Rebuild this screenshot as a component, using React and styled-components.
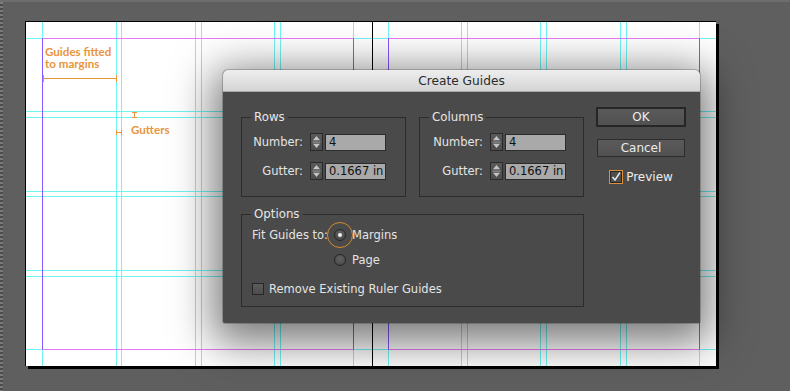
import React from "react";
import styled, { createGlobalStyle } from "styled-components";

const GlobalStyle = createGlobalStyle`
  html, body { margin: 0; padding: 0; background: #5f5f5f; }
  body { width: 790px; height: 391px; overflow: hidden; }
  *, *::before, *::after { box-sizing: border-box; }
`;

const Workspace = styled.div`
  position: relative;
  width: 790px;
  height: 391px;
  background: #5f5f5f;
  display: flex;
  flex-direction: column;
`;

const TopStrip = styled.div`
  flex: none;
  height: 2px;
  background: #6d6d6d;
`;

const WorkRow = styled.div`
  flex: 1;
  display: flex;
`;

const Ruler = styled.div`
  flex: none;
  width: 3px;
  background: repeating-linear-gradient(to bottom, #7a7a7a 0 2px, #4c4c4c 2px 4px);
`;

const Canvas = styled.div`
  flex: 1;
  padding: 19px 0 0 22px;
`;

const Spread = styled.div`
  position: relative;
  width: 691px;
  height: 345px;
  background: #fff;
  border-top: 1px solid #000;
  border-left: 1px solid #000;
  box-shadow: 3px 3px 0 #000;
`;

const VGuide = styled.div`
  position: absolute;
  top: 0;
  bottom: 0;
  left: ${(p) => p.$x}px;
  width: 1px;
  background: #6ff4f4;
`;

const HGuide = styled.div`
  position: absolute;
  left: 0;
  right: 0;
  top: ${(p) => p.$y}px;
  height: 1px;
  background: #6ff4f4;
`;

const MarginBox = styled.div`
  position: absolute;
  top: 16px;
  left: ${(p) => p.$x}px;
  width: 312px;
  height: 312px;
  border-top: 1px solid #e779f6;
  border-bottom: 1px solid #e779f6;
  border-left: 1px solid #8757ff;
  border-right: 1px solid #8757ff;
`;

const Spine = styled.div`
  position: absolute;
  top: 0;
  bottom: 0;
  left: 346px;
  width: 1px;
  background: #000;
`;

const Note = styled.div`
  position: absolute;
  left: ${(p) => p.$x}px;
  top: ${(p) => p.$y}px;
  font-family: Lato, "Open Sans", sans-serif;
  font-weight: 700;
  font-size: 11.6px;
  line-height: 12px;
  color: #e8953d;
  white-space: nowrap;
`;

const NoteLine = styled.div`
  height: 12px;
`;

const Mark = styled.svg`
  position: absolute;
  left: ${(p) => p.$x}px;
  top: ${(p) => p.$y}px;
  overflow: visible;
`;

/* ---------- dialog ---------- */

const Dialog = styled.div`
  position: absolute;
  left: 223px;
  top: 70px;
  width: 477px;
  height: 253px;
  display: flex;
  flex-direction: column;
  background: #4a4a4a;
  border-radius: 5px 5px 2px 2px;
  overflow: hidden;
  box-shadow: 0 10px 42px 10px rgba(0, 0, 0, 0.52), 0 0 0 1px rgba(0, 0, 0, 0.2);
  font-family: "DejaVu Sans", Verdana, sans-serif;
  font-size: 11.5px;
  color: #e4e4e4;
`;

const TitleBar = styled.div`
  flex: none;
  height: 22px;
  display: flex;
  align-items: center;
  justify-content: center;
  background: linear-gradient(#eeeeee, #d4d4d4);
  border-bottom: 1px solid #a9a9a9;
  color: #2b2b2b;
  font-size: 12.2px;
`;

const Body = styled.div`
  flex: 1;
  display: flex;
  gap: 12px;
  padding: 15px 15px 0 18px;
`;

const MainCol = styled.div`
  width: 343px;
  padding-top: 3px;
  display: flex;
  flex-direction: column;
  gap: 10px;
`;

const GroupRow = styled.div`
  display: flex;
  gap: 13px;
`;

const Group = styled.fieldset`
  margin: 0;
  width: ${(p) => p.$w}px;
  border: 1px solid #2c2c2c;
  padding: ${(p) => p.$pad};
  min-width: 0;
`;

const Legend = styled.legend`
  margin-left: 9px;
  padding: 0 3px;
  line-height: 14px;
  height: 14px;
  font-size: 11.8px;
  color: #e6e6e6;
`;

const FieldStack = styled.div`
  display: flex;
  flex-direction: column;
  gap: 11px;
  padding-left: ${(p) => p.$inset}px;
`;

const FieldRow = styled.div`
  display: flex;
  align-items: center;
  height: 18px;
`;

const FieldLabel = styled.span`
  width: 50px;
  margin-right: 7px;
  text-align: right;
  white-space: nowrap;
`;

const SpinBox = styled.div`
  flex: none;
  width: 13px;
  height: 18px;
  margin-right: 2px;
  border: 1px solid #2a2a2a;
  background: linear-gradient(#595959, #4d4d4d);
  display: flex;
  align-items: center;
  justify-content: center;
`;

const Input = styled.div`
  width: 61px;
  height: 17px;
  background: #a9a9a9;
  border: 1px solid #2c2c2c;
  color: #111;
  padding-left: 3px;
  line-height: 15px;
  font-size: 11.5px;
  white-space: nowrap;
  overflow: hidden;
`;

const Options = styled.div`
  display: flex;
  flex-direction: column;
  padding-left: 10px;
`;

const FitRow = styled.div`
  display: flex;
  align-items: flex-start;
  gap: 6px;
`;

const RadioStack = styled.div`
  display: flex;
  flex-direction: column;
  gap: 9px;
`;

const OptText = styled.span`
  line-height: 16px;
  white-space: nowrap;
`;

const RadioRow = styled.label`
  display: flex;
  align-items: center;
  gap: 6px;
  height: 16px;
`;

const Radio = styled.span`
  position: relative;
  flex: none;
  width: 12px;
  height: 12px;
  border-radius: 50%;
  border: 1px solid #262626;
  background: radial-gradient(circle at 50% 35%, #626262, #444);
  display: flex;
  align-items: center;
  justify-content: center;
  &::before {
    content: "";
    display: ${(p) => (p.$checked ? "block" : "none")};
    width: 4px;
    height: 4px;
    border-radius: 50%;
    background: #f0f0f0;
  }
  &::after {
    content: "";
    display: ${(p) => (p.$focus ? "block" : "none")};
    position: absolute;
    left: 50%;
    top: 50%;
    width: 26px;
    height: 26px;
    margin: -13px 0 0 -13px;
    border-radius: 50%;
    border: 1.5px solid #d48a2f;
  }
`;

const CheckRow = styled.label`
  margin-top: 13px;
  display: flex;
  align-items: center;
  gap: 5px;
  height: 16px;
`;

const Box = styled.span`
  flex: none;
  width: 12px;
  height: 12px;
  border: 1px solid #262626;
  background: linear-gradient(#5c5c5c, #4c4c4c);
`;

const SideCol = styled.div`
  width: 90px;
  display: flex;
  flex-direction: column;
  align-items: center;
`;

const Button = styled.div`
  width: ${(p) => (p.$default ? 90 : 88)}px;
  height: ${(p) => (p.$default ? 20 : 18)}px;
  margin-top: ${(p) => p.$mt}px;
  border: ${(p) => (p.$default ? "2px solid #262626" : "1px solid #2c2c2c")};
  background: linear-gradient(#5a5a5a, #515151);
  display: flex;
  align-items: center;
  justify-content: center;
  font-size: 12px;
  color: #ececec;
`;

const PreviewRow = styled.label`
  margin-top: 13px;
  display: flex;
  align-items: center;
  gap: 3px;
  font-size: 12px;
  color: #ececec;
`;

const FocusBox = styled.span`
  width: 14px;
  height: 14px;
  border: 1px solid #e0903a;
  display: flex;
  align-items: center;
  justify-content: center;
`;

const InnerBox = styled.span`
  width: 12px;
  height: 12px;
  border: 1px solid #262626;
  background: #4e4e4e;
  display: flex;
  align-items: center;
  justify-content: center;
`;

const vx = [16, 90, 95, 169, 175, 248, 254, 327, 362, 435, 441, 514, 520, 594, 600, 673];
const hy = [16, 89, 95, 169, 174, 248, 254, 327];

function Spinner() {
  return (
    <SpinBox>
      <svg width="11" height="16" viewBox="0 0 11 16">
        <polygon points="5.5,2 9,6.3 2,6.3" fill="#c4c4c4" />
        <rect x="1.5" y="7.6" width="8" height="1" fill="#9c9c9c" />
        <polygon points="2,9.7 9,9.7 5.5,14" fill="#c4c4c4" />
      </svg>
    </SpinBox>
  );
}

function Field({ label, value }) {
  return (
    <FieldRow>
      <FieldLabel>{label}</FieldLabel>
      <Spinner />
      <Input>{value}</Input>
    </FieldRow>
  );
}

function GuideGroup({ title, inset }) {
  return (
    <Group $w={165} $pad="9px 0 16px 0">
      <Legend>{title}</Legend>
      <FieldStack $inset={inset}>
        <Field label="Number:" value="4" />
        <Field label="Gutter:" value="0.1667 in" />
      </FieldStack>
    </Group>
  );
}

export default function App() {
  return (
    <Workspace>
      <GlobalStyle />
      <TopStrip />
      <WorkRow>
        <Ruler />
        <Canvas>
          <Spread>
            {vx.map((x) => (
              <VGuide key={"v" + x} $x={x} />
            ))}
            {hy.map((y) => (
              <HGuide key={"h" + y} $y={y} />
            ))}
            <MarginBox $x={16} />
            <MarginBox $x={362} />
            <Spine />
            <Note $x={19} $y={24}>
              <NoteLine>Guides fitted</NoteLine>
              <NoteLine>to margins</NoteLine>
            </Note>
            <Mark $x={17} $y={53} width="74" height="7">
              <line x1="0" y1="3.5" x2="74" y2="3.5" stroke="#e8953d" strokeWidth="1" />
              <line x1="0.5" y1="0" x2="0.5" y2="7" stroke="#e8953d" strokeWidth="1" />
              <line x1="73.5" y1="0" x2="73.5" y2="7" stroke="#e8953d" strokeWidth="1" />
            </Mark>
            <Mark $x={106} $y={90} width="5" height="6">
              <line x1="2.5" y1="0" x2="2.5" y2="6" stroke="#e8953d" strokeWidth="1" />
              <line x1="0" y1="0.5" x2="5" y2="0.5" stroke="#e8953d" strokeWidth="1" />
              <line x1="0" y1="5.5" x2="5" y2="5.5" stroke="#e8953d" strokeWidth="1" />
            </Mark>
            <Mark $x={90} $y={108} width="6" height="5">
              <line x1="0" y1="2.5" x2="6" y2="2.5" stroke="#e8953d" strokeWidth="1" />
              <line x1="0.5" y1="0" x2="0.5" y2="5" stroke="#e8953d" strokeWidth="1" />
              <line x1="5.5" y1="0" x2="5.5" y2="5" stroke="#e8953d" strokeWidth="1" />
            </Mark>
            <Note $x={105} $y={102}>Gutters</Note>
          </Spread>
        </Canvas>
      </WorkRow>

      <Dialog>
        <TitleBar>Create Guides</TitleBar>
        <Body>
          <MainCol>
            <GroupRow>
              <GuideGroup title="Rows" inset={11} />
              <GuideGroup title="Columns" inset={13} />
            </GroupRow>
            <Group $w={343} $pad="6px 0 9px 0">
              <Legend>Options</Legend>
              <Options>
                <FitRow>
                  <OptText>Fit Guides to:</OptText>
                  <RadioStack>
                    <RadioRow>
                      <Radio $checked $focus />
                      <OptText>Margins</OptText>
                    </RadioRow>
                    <RadioRow>
                      <Radio />
                      <OptText>Page</OptText>
                    </RadioRow>
                  </RadioStack>
                </FitRow>
                <CheckRow>
                  <Box />
                  <OptText>Remove Existing Ruler Guides</OptText>
                </CheckRow>
              </Options>
            </Group>
          </MainCol>
          <SideCol>
            <Button $default $mt={0}>OK</Button>
            <Button $mt={12}>Cancel</Button>
            <PreviewRow>
              <FocusBox>
                <InnerBox>
                  <svg width="10" height="10" viewBox="0 0 10 10">
                    <path d="M1.5 5 L4 8 L9 0.5" fill="none" stroke="#e6e6e6" strokeWidth="1.5" />
                  </svg>
                </InnerBox>
              </FocusBox>
              Preview
            </PreviewRow>
          </SideCol>
        </Body>
      </Dialog>
    </Workspace>
  );
}
